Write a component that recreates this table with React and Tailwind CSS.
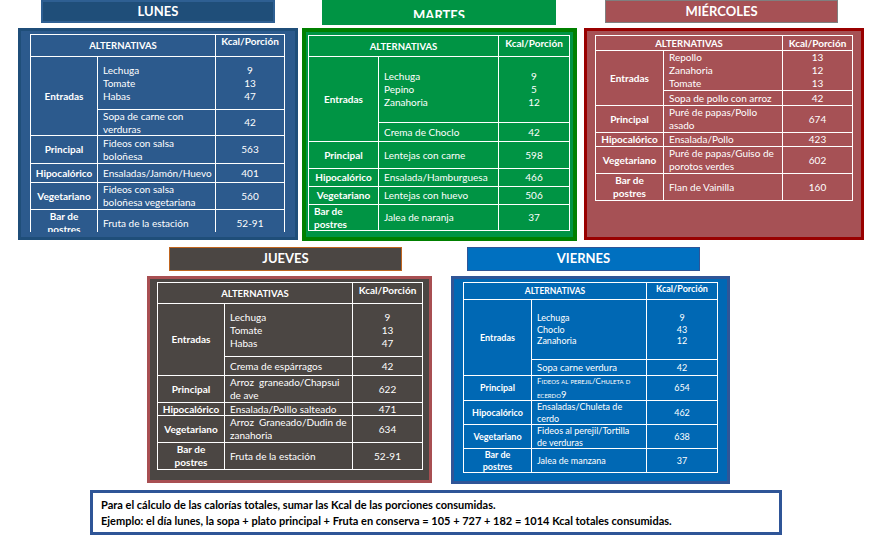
import React from "react";

const days = {
  lunes: {
    cell: "bg-[#2c5a8d]",
    grid: "grid-cols-[66px_117px_68px] grid-rows-[21px_52px_25px_27px_18px_26px_26px]",
    text: "text-[10px] leading-[13px]",
    alt: "text-[9.5px]",
    kcal: "items-start",
    entr: ["Lechuga\nTomate\nHabas", "9\n13\n47"],
    soup: ["Sopa de carne con\nverduras", "42"],
    rows: [
      ["Principal", "Fideos con salsa\nboloñesa", "563"],
      ["Hipocalórico", "Ensaladas/Jamón/Huevo", "401"],
      ["Vegetariano", "Fideos con salsa\nboloñesa vegetariana", "560"],
      ["Bar de\npostres", "Fruta de la estación", "52-91"],
    ],
  },
  martes: {
    cell: "bg-[#009444]",
    grid: "grid-cols-[69px_119px_70px] grid-rows-[20px_65px_18px_26px_17px_17px_25px]",
    text: "text-[10px] leading-[13px]",
    alt: "text-[9.5px]",
    kcal: "items-start pt-px",
    barLeft: true,
    entr: ["Lechuga\nPepino\nZanahoria", "9\n5\n12"],
    soup: ["Crema de Choclo", "42"],
    rows: [
      ["Principal", "Lentejas con carne", "598"],
      ["Hipocalórico", "Ensalada/Hamburguesa", "466"],
      ["Vegetariano", "Lentejas con huevo", "506"],
      ["Bar de\npostres", "Jalea de naranja", "37"],
    ],
  },
  miercoles: {
    cell: "bg-[#a65155]",
    grid: "grid-cols-[67px_118px_69px] grid-rows-[14px_39px_14px_26px_13px_26px_26px]",
    text: "text-[10px] leading-[13px]",
    alt: "text-[9.5px]",
    kcal: "items-center",
    entr: ["Repollo\nZanahoria\nTomate", "13\n12\n13"],
    soup: ["Sopa de pollo con arroz", "42"],
    rows: [
      ["Principal", "Puré de papas/Pollo\nasado", "674"],
      ["Hipocalórico", "Ensalada/Pollo", "423"],
      ["Vegetariano", "Puré de papas/Guiso de\nporotos verdes", "602"],
      ["Bar de\npostres", "Flan de Vainilla", "160"],
    ],
  },
  jueves: {
    cell: "bg-[#4b4643]",
    grid: "grid-cols-[66px_127px_69px] grid-rows-[20px_52px_18px_26px_12px_26px_26px]",
    text: "text-[10px] leading-[13px]",
    alt: "text-[9.5px]",
    kcal: "items-start pt-px",
    entr: ["Lechuga\nTomate\nHabas", "9\n13\n47"],
    soup: ["Crema de espárragos", "42"],
    rows: [
      ["Principal", "Arroz  graneado/Chapsui\nde ave", "622"],
      ["Hipocalórico", "Ensalada/Polllo salteado", "471"],
      ["Vegetariano", "Arroz  Graneado/Dudin de\nzanahoria", "634"],
      ["Bar de\npostres", "Fruta de la estación", "52-91"],
    ],
  },
  viernes: {
    cell: "bg-[#0068b4]",
    grid: "grid-cols-[67px_114px_70px] grid-rows-[16px_59px_15px_24px_23px_23px_23px]",
    text: "text-[9px] leading-[12px]",
    alt: "text-[8.5px]",
    kcal: "items-start",
    small: true,
    entr: ["Lechuga\nChoclo\nZanahoria", "9\n43\n12"],
    soup: ["Sopa carne verdura", "42"],
    rows: [
      ["Principal", "caps", "654"],
      ["Hipocalórico", "Ensaladas/Chuleta de\ncerdo", "462"],
      ["Vegetariano", "Fideos al perejil/Tortilla\nde verduras", "638"],
      ["Bar de\npostres", "Jalea de manzana", "37"],
    ],
  },
};

const Cell = ({ bg, className = "", children }) => (
  <div className={`flex whitespace-pre-wrap ${bg} ${className}`}>{children}</div>
);

function Menu({ d }) {
  const label = "items-center justify-center text-center font-bold";
  const text = "items-center pl-[5px]";
  const num = "items-center justify-center text-center";
  return (
    <div className={`grid w-fit gap-px bg-white p-px text-white ${d.grid} ${d.text}`}>
      <Cell bg={d.cell} className={`col-span-2 items-center justify-center font-bold ${d.alt}`}>
        ALTERNATIVAS
      </Cell>
      <Cell bg={d.cell} className={`justify-center font-bold ${d.kcal}`}>
        Kcal/Porción
      </Cell>
      <Cell bg={d.cell} className={`row-span-2 ${label}`}>
        Entradas
      </Cell>
      <Cell bg={d.cell} className={d.small ? `${text} leading-[11.5px]` : text}>
        {d.entr[0]}
      </Cell>
      <Cell bg={d.cell} className={d.small ? `${num} leading-[11.5px]` : num}>
        {d.entr[1]}
      </Cell>
      <Cell bg={d.cell} className={d.small ? `${text} text-[9.5px]` : text}>
        {d.soup[0]}
      </Cell>
      <Cell bg={d.cell} className={num}>
        {d.soup[1]}
      </Cell>
      {d.rows.map(([a, b, c]) => (
        <React.Fragment key={a}>
          <Cell
            bg={d.cell}
            className={
              d.barLeft && a.startsWith("Bar")
                ? "items-center pl-[5px] font-bold"
                : label
            }
          >
            {a}
          </Cell>
          <Cell bg={d.cell} className={text}>
            {b === "caps" ? (
              <span className="text-[8px] leading-[13px] [font-variant:small-caps]">
                Fideos al perejil/Chuleta d
                <br />
                ecerdo<span className="text-[9.5px]">9</span>
              </span>
            ) : (
              b
            )}
          </Cell>
          <Cell bg={d.cell} className={num}>
            {c}
          </Cell>
        </React.Fragment>
      ))}
    </div>
  );
}

const Title = ({ children }) => (
  <div className="flex h-full items-center justify-center text-[13px] font-bold text-white">
    {children}
  </div>
);

export default function App() {
  return (
    <div className="relative h-[536px] w-[877px] overflow-hidden bg-white [font-family:Lato,sans-serif]">
      {/* fila superior */}
      <div className="flex items-start">
        <div className="ml-[18px] flex w-[280px] flex-col">
          <div className="ml-[23px] h-[23px] w-[234px] border-2 border-[#2e5f92] bg-[#1f4e79]">
            <Title>LUNES</Title>
          </div>
          <div className="mt-[5px] h-[212px] w-[280px] border-[3px] border-[#1f4e79] bg-[#2c5a8d] pl-[9px] pt-[3px]">
            <div className="h-[198px] overflow-hidden">
              <Menu d={days.lunes} />
            </div>
          </div>
        </div>

        <div className="ml-[4px] flex w-[275px] flex-col">
          <div className="ml-[20px] h-[25px] w-[234px] bg-[#009444]">
            <div className="h-[18px] overflow-hidden pt-[8px] text-center text-[13px] font-bold leading-[15px] text-white">
              MARTES
            </div>
          </div>
          <div className="mt-[3px] h-[213px] w-[275px] border-4 border-[#008000] bg-[#009444] pl-[2px] pt-[3px]">
            <Menu d={days.martes} />
          </div>
        </div>

        <div className="ml-[7px] flex w-[280px] flex-col">
          <div className="ml-[21px] h-[23px] w-[233px] border border-[#7f7f7f] bg-[#a65155]">
            <Title>MIÉRCOLES</Title>
          </div>
          <div className="mt-[5px] h-[212px] w-[280px] border-[3px] border-[#990000] bg-[#a65155] pl-[8px] pt-[4px]">
            <Menu d={days.miercoles} />
          </div>
        </div>
      </div>

      {/* fila inferior */}
      <div className="mt-[6px] flex items-start">
        <div className="ml-[147px] flex w-[285px] flex-col">
          <div className="ml-[22px] h-[24px] w-[233px] border border-[#c0651f] bg-[#4b4643]">
            <Title>JUEVES</Title>
          </div>
          <div className="mt-[5px] h-[207px] w-[285px] border-[3px] border-[#a84f52] bg-[#4b4643] pl-[7px] pt-[3px]">
            <Menu d={days.jueves} />
          </div>
        </div>

        <div className="ml-[19px] flex w-[279px] flex-col">
          <div className="ml-[16px] h-[24px] w-[233px] border border-[#2f5597] bg-[#0070c0]">
            <Title>VIERNES</Title>
          </div>
          <div className="mt-[5px] h-[208px] w-[279px] border-[3px] border-[#2f5597] bg-[#0068b4] pl-[9px] pt-[3px]">
            <Menu d={days.viernes} />
          </div>
        </div>
      </div>

      {/* nota */}
      <div className="ml-[90px] mt-[6px] flex h-[45px] w-[692px] flex-col justify-center border-[3px] border-[#2f5597] bg-white pl-[8px] text-[11px] font-bold leading-[16px] text-black">
        <p>Para el cálculo de las calorías totales, sumar las Kcal de las porciones consumidas.</p>
        <p>
          Ejemplo: el día lunes, la sopa + plato principal + Fruta en conserva = 105 + 727 + 182 = 1014 Kcal totales consumidas.
        </p>
      </div>
    </div>
  );
}
